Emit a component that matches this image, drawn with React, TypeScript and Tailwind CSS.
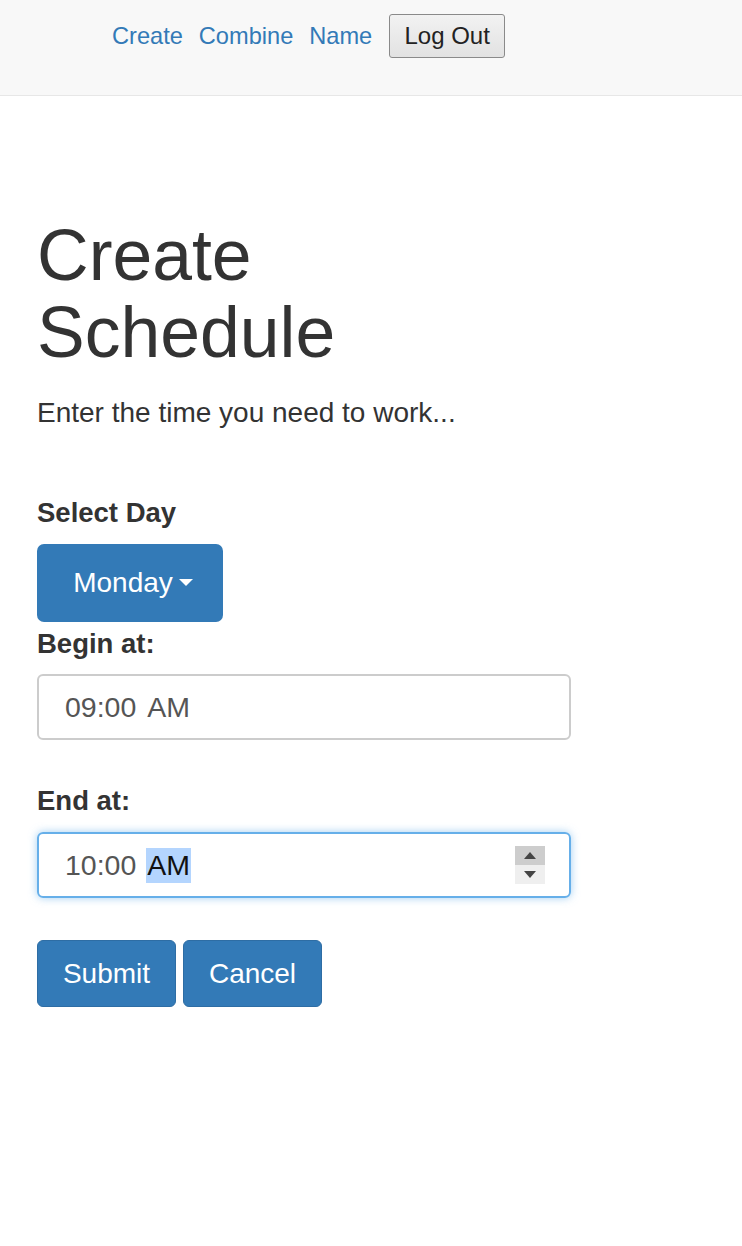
import React from "react";

const font = { fontFamily: '"Liberation Sans", Arial, sans-serif' };

const App = () => {
  return (
    <div className="min-h-[1246px] bg-white text-[#333]" style={font}>
      {/* NAVBAR */}
      <nav className="h-[96px] bg-[#f8f8f8] border-b border-[#e7e7e7]">
        <div className="flex items-center gap-[16px] pl-[112px] pt-[14px]">
          <a href="#" className="text-[23.6px] leading-[44px] text-[#337ab7]">
            Create
          </a>
          <a href="#" className="text-[23.6px] leading-[44px] text-[#337ab7]">
            Combine
          </a>
          <a href="#" className="text-[23.6px] leading-[44px] text-[#337ab7]">
            Name
          </a>
          <button className="ml-[1px] h-[44px] w-[116px] rounded-[3px] border border-[#8a8a8a] bg-gradient-to-b from-[#f2f2f2] to-[#e2e2e2] text-[24px] text-[#222]">
            Log Out
          </button>
        </div>
      </nav>

      {/* CONTENT */}
      <main className="px-[37px] pt-[121px]">
        <h1 className="text-[71.5px] leading-[77px] font-normal">
          Create
          <br />
          Schedule
        </h1>
        <p className="mt-[23px] text-[28px] leading-[38px]">
          Enter the time you need to work...
        </p>

        <form className="mt-[62px]">
          <label className="block text-[27.5px] leading-[38px] font-bold">
            Select Day
          </label>
          <button
            type="button"
            className="mt-[12px] flex h-[78px] w-[186px] items-center justify-center gap-[6px] rounded-[7px] bg-[#337ab7] pl-[6px] text-[28px] text-white"
          >
            Monday
            <svg width="14" height="8" viewBox="0 0 14 8">
              <path d="M0 0h14L7 7z" fill="#fff" />
            </svg>
          </button>

          <label className="mt-[3px] block text-[27.5px] leading-[38px] font-bold">
            Begin at:
          </label>
          <div className="mt-[11px] flex h-[66px] w-[534px] items-center rounded-[6px] border-2 border-[#ccc] pl-[26px] text-[28.5px] text-[#555]">
            <span>09:00</span>
            <span className="ml-[11px]">AM</span>
          </div>

          <label className="mt-[42px] block text-[27.5px] leading-[38px] font-bold">
            End at:
          </label>
          <div className="mt-[12px] flex h-[66px] w-[534px] items-center rounded-[6px] border-2 border-[#66afe9] pl-[26px] pr-[24px] text-[28.5px] text-[#555] shadow-[0_0_8px_rgba(102,175,233,0.6)]">
            <span>10:00</span>
            <span className="ml-[10px] bg-[#b4d5fe] px-[1px] leading-[35px] text-[#111]">
              AM
            </span>
            <div className="ml-auto flex w-[30px] flex-col">
              <div className="flex h-[19px] items-center justify-center bg-[#cdcdcd]">
                <svg width="12" height="7" viewBox="0 0 12 7">
                  <path d="M6 0L12 7H0z" fill="#444" />
                </svg>
              </div>
              <div className="flex h-[19px] items-center justify-center bg-[#efefef]">
                <svg width="12" height="7" viewBox="0 0 12 7">
                  <path d="M0 0h12L6 7z" fill="#444" />
                </svg>
              </div>
            </div>
          </div>

          <div className="mt-[42px] flex gap-[7px]">
            <button
              type="button"
              className="h-[67px] w-[139px] rounded-[6px] border border-[#2e6da4] bg-[#337ab7] text-[28px] text-white"
            >
              Submit
            </button>
            <button
              type="button"
              className="h-[67px] w-[139px] rounded-[6px] border border-[#2e6da4] bg-[#337ab7] text-[28px] text-white"
            >
              Cancel
            </button>
          </div>
        </form>
      </main>
    </div>
  );
};

export default App;
